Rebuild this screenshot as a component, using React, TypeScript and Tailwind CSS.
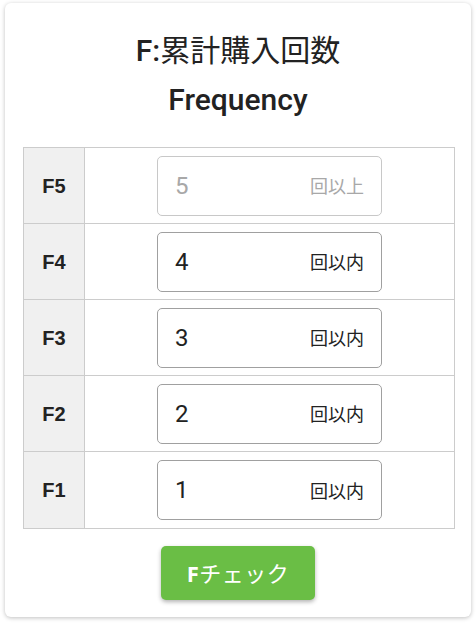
import React from "react";

const rows = [
  { label: "F5", value: "5", suffix: "回以上", disabled: true },
  { label: "F4", value: "4", suffix: "回以内", disabled: false },
  { label: "F3", value: "3", suffix: "回以内", disabled: false },
  { label: "F2", value: "2", suffix: "回以内", disabled: false },
  { label: "F1", value: "1", suffix: "回以内", disabled: false },
];

export default function App() {
  return (
    <div className="w-[476px] h-[626px] bg-white pt-[3px] pl-[5px]">
      <div
        className="w-[466px] h-[614px] bg-white rounded-[6px] shadow-[0_1px_4px_rgba(0,0,0,0.25)] flex flex-col items-center pt-[29px]"
        style={{ fontFamily: "Roboto, 'Noto Sans CJK JP', sans-serif" }}
      >
        <div className="h-[38px] leading-[38px] text-[30px] text-[#222]">
          <span className="font-medium">F:</span>累計購入回数
        </div>
        <div className="mt-[11px] h-[38px] leading-[38px] text-[30px] font-medium text-[#222]">
          Frequency
        </div>
        <div className="mt-[28px] self-start ml-[18px] w-[432px] border border-[#cccccc]">
          {rows.map((r, i) => (
            <div
              key={r.label}
              className={`flex h-[76px] ${i < rows.length - 1 ? "border-b border-[#cccccc]" : "h-[75px]"}`}
            >
              <div
                className="w-[61px] bg-[#f0f0f0] border-r border-[#cccccc] flex items-center justify-center text-[20px] font-bold text-[#222]"
                style={{ fontFamily: "'Liberation Sans', Arial, sans-serif" }}
              >
                {r.label}
              </div>
              <div className="flex-1 flex items-center justify-center">
                <div
                  className={`w-[225px] h-[60px] rounded-[5px] border flex items-center justify-between pl-[17px] pr-[17px] ${
                    r.disabled ? "border-[#c8c8c8]" : "border-[#a0a0a0]"
                  }`}
                >
                  <span
                    className={`text-[24px] ${r.disabled ? "text-[#a8a8a8]" : "text-[#222]"}`}
                    style={{ fontFamily: "Roboto, sans-serif" }}
                  >
                    {r.value}
                  </span>
                  <span
                    className={`text-[18px] ${r.disabled ? "text-[#a8a8a8]" : "text-[#222]"}`}
                    style={{ fontFamily: "'Noto Sans CJK JP', sans-serif" }}
                  >
                    {r.suffix}
                  </span>
                </div>
              </div>
            </div>
          ))}
        </div>
        <button
          className="mt-[17px] w-[154px] h-[54px] rounded-[5px] bg-[#6abe45] text-white text-[22px] tracking-[0.5px] shadow-[0_2px_4px_rgba(0,0,0,0.3)] flex items-center justify-center"
          style={{ fontFamily: "'Open Sans', 'Noto Sans CJK JP', sans-serif" }}
        >
          <span className="font-bold">F</span>チェック
        </button>
      </div>
    </div>
  );
}
